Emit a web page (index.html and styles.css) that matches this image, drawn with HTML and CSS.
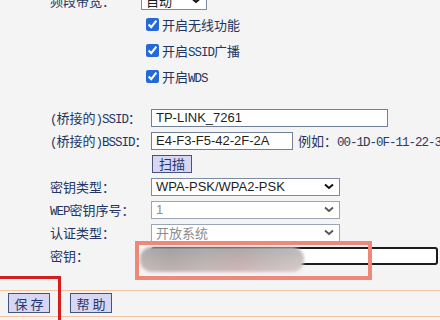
FILE: index.html
```html
<!DOCTYPE html>
<html lang="zh-CN">
<head>
    <meta charset="UTF-8">
    <meta name="viewport" content="width=device-width, initial-scale=1.0">
    <title>无线网络基本设置</title>
    <link rel="stylesheet" href="styles.css">
</head>
<body>
    <div class="page">
        <!-- 无线开关 -->
        <div class="form-top">
            <div class="label">频段带宽：</div>
            <div class="field">
                <div class="select select-auto">自动
                    <svg width="10" height="7" viewBox="0 0 10 7"><path d="M1 1.5l4 3.5 4-3.5" fill="none" stroke="#111" stroke-width="2"/></svg>
                </div>
            </div>
            <div class="label"></div>
            <div class="field"><label class="check"><input type="checkbox" checked><span>开启无线功能</span></label></div>
            <div class="label"></div>
            <div class="field"><label class="check"><input type="checkbox" checked><span>开启<span class="en">SSID</span>广播</span></label></div>
            <div class="label"></div>
            <div class="field"><label class="check"><input type="checkbox" checked><span>开启<span class="en">WDS</span></span></label></div>
        </div>

        <!-- WDS 桥接 -->
        <div class="form-bridge">
            <div class="label"><span class="en">(</span>桥接的<span class="en">)SSID</span>：</div>
            <div class="field"><input class="text text-ssid" type="text" value="TP-LINK_7261"></div>

            <div class="label"><span class="en">(</span>桥接的<span class="en">)BSSID</span>：</div>
            <div class="field">
                <input class="text text-bssid" type="text" value="E4-F3-F5-42-2F-2A">
                <span class="hint">例如：<span class="en">00-1D-0F-11-22-33</span></span>
            </div>

            <div class="label"></div>
            <div class="field"><button class="btn btn-scan">扫描</button></div>

            <div class="label">密钥类型：</div>
            <div class="field">
                <div class="select">WPA-PSK/WPA2-PSK
                    <svg width="10" height="7" viewBox="0 0 10 7"><path d="M1 1.5l4 3.5 4-3.5" fill="none" stroke="#111" stroke-width="2"/></svg>
                </div>
            </div>

            <div class="label"><span class="en">WEP</span>密钥序号：</div>
            <div class="field">
                <div class="select disabled">1
                    <svg width="10" height="7" viewBox="0 0 10 7"><path d="M1 1.5l4 3.5 4-3.5" fill="none" stroke="#555" stroke-width="1.8"/></svg>
                </div>
            </div>

            <div class="label">认证类型：</div>
            <div class="field">
                <div class="select disabled">开放系统
                    <svg width="10" height="7" viewBox="0 0 10 7"><path d="M1 1.5l4 3.5 4-3.5" fill="none" stroke="#555" stroke-width="1.8"/></svg>
                </div>
            </div>

            <div class="label">密钥：</div>
            <div class="field"><input class="text text-key" type="password" value="12345678"></div>
        </div>

        <div class="bottom-bar">
            <button class="btn btn-big">保 存</button>
            <button class="btn btn-big">帮 助</button>
        </div>
    </div>

    <!-- 截图上的标注 -->
    <div class="blur"></div>
    <div class="mark mark-key"></div>
    <div class="mark mark-save"></div>
</body>
</html>
```

FILE: styles.css
```css
body {
    margin: 0;
    background: #f4f4f4;
    font-family: "Noto Sans CJK SC", sans-serif;
    font-size: 13px;
    color: #233462;
    overflow: hidden;
    position: relative;
    height: 320px;
}

.page {
    margin-top: -10px;
}

.en {
    font-family: "Liberation Mono", monospace;
    font-size: 12.5px;
    letter-spacing: -1px;
}

.form-top,
.form-bridge {
    display: grid;
    padding-left: 48px;
    align-items: center;
}

.form-top {
    grid-template-columns: 93px auto;
    grid-template-rows: 21px repeat(3, 26px);
}

.form-bridge {
    margin-top: 17px;
    grid-template-columns: 103px auto;
    grid-auto-rows: 23px;
}

.label {
    white-space: nowrap;
    padding-left: 2px;
}

.field {
    display: flex;
    align-items: center;
    white-space: nowrap;
}

.check {
    display: flex;
    align-items: center;
}

.check input {
    margin: 0 3px 0 5px;
    width: 13px;
    height: 13px;
    accent-color: #2469d6;
}

.select {
    box-sizing: border-box;
    width: 189px;
    height: 18px;
    display: flex;
    align-items: center;
    justify-content: space-between;
    padding: 0 5px 0 4px;
    background: #fff;
    border: 1px solid #7d8ba3;
    font-family: "Liberation Sans", "Noto Sans CJK SC", sans-serif;
    font-size: 13px;
    color: #1e1e1e;
}

.select-auto {
    width: 66px;
}

.select.disabled {
    color: #8c8c8c;
    border-color: #9aa5b6;
}

.text {
    box-sizing: border-box;
    height: 18px;
    margin: 0;
    padding: 0 4px;
    background: #fff;
    border: 1px solid #6f7f97;
    font-family: "Liberation Sans", sans-serif;
    font-size: 13px;
    color: #1e1e1e;
}

.text-ssid {
    width: 237px;
}

.text-bssid {
    width: 142px;
}

.text-key {
    width: 287px;
    border: 2px solid #1c1c1c;
    border-radius: 3px;
}

.hint {
    margin-left: 5px;
}

.hint .en {
    color: #2a3a66;
}

.btn {
    box-sizing: border-box;
    margin: 0;
    padding: 0;
    background: #d7d7f3;
    border: 1px solid #46527f;
    font-family: "Noto Sans CJK SC", sans-serif;
    font-size: 13px;
    color: #26366a;
    line-height: 1;
}

.btn-scan {
    width: 40px;
    height: 18px;
    margin-left: 1px;
}

.bottom-bar {
    margin-top: 23px;
    border-top: 1px solid #f3c7a3;
    border-bottom: 1px solid #f3c7a3;
    padding: 2px 0 3px 8px;
    display: flex;
    gap: 20px;
}

.btn-big {
    width: 42px;
    height: 20px;
}

/* 标注 */
.blur {
    position: absolute;
    left: 140px;
    top: 247px;
    width: 164px;
    height: 25px;
    border-radius: 12px;
    background:
        linear-gradient(180deg, rgba(150, 150, 150, 0.45), rgba(225, 190, 190, 0.45)),
        linear-gradient(90deg, #bcbcbc, #a8a8a8 18%, #b8b8b8 40%, #c4b2b2 60%, #c6c6c6 80%, #d6d6d6);
    filter: blur(1.5px);
}

.mark {
    position: absolute;
    box-sizing: border-box;
}

.mark-key {
    left: 135px;
    top: 241px;
    width: 237px;
    height: 39px;
    border: 4px solid #f0887a;
}

.mark-save {
    left: -5px;
    top: 276px;
    width: 66px;
    height: 60px;
    border: 3px solid #d41f1f;
}
```
